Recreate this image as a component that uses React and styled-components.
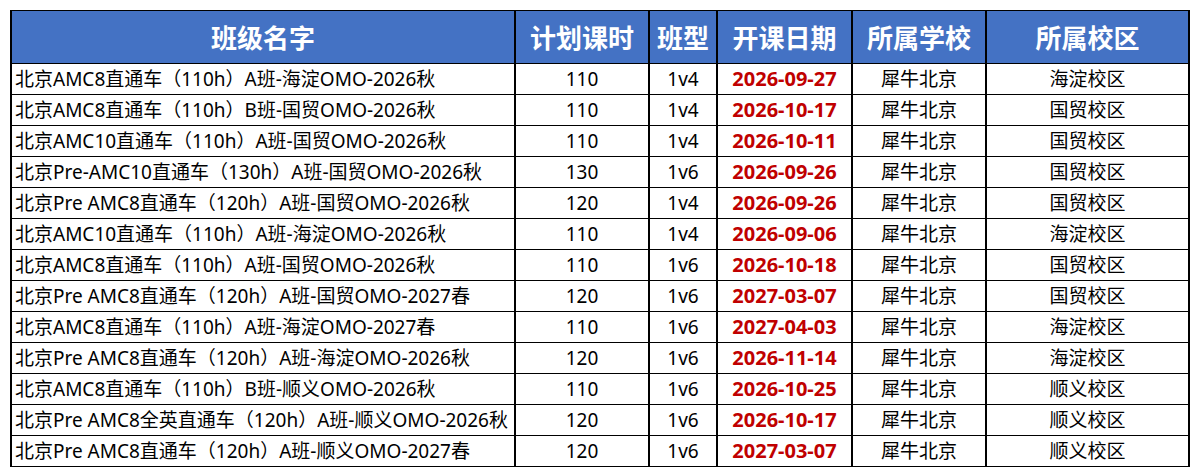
import React from "react";
import styled, { createGlobalStyle } from "styled-components";

const GlobalStyle = createGlobalStyle`
  html, body {
    margin: 0;
    padding: 0;
    background: #ffffff;
  }
  body {
    font-family: "Noto Sans", "Noto Sans CJK SC", sans-serif;
  }
`;

const Page = styled.div`
  padding: 10px 0 0 10px;
`;

const Table = styled.table`
  border-collapse: collapse;
  table-layout: fixed;
  width: 1178px;
  color: #000;
`;

const HeadCell = styled.th`
  height: 52px;
  padding: 0;
  background: #4472c4;
  color: #ffffff;
  font-size: 26px;
  font-weight: 700;
  text-align: center;
  white-space: nowrap;
  border: 1px solid #000;
  border-left-width: 2px;
  border-right-width: 2px;
`;

const Cell = styled.td`
  height: 30px;
  padding: 0 ${(p) => (p.$left ? "3px" : "0")};
  font-size: ${(p) => (p.$date ? "20px" : "19px")};
  line-height: 30px;
  white-space: nowrap;
  overflow: hidden;
  text-align: ${(p) => (p.$left ? "left" : "center")};
  font-weight: ${(p) => (p.$date ? 700 : 400)};
  color: ${(p) => (p.$date ? "#c00000" : "#000")};
  border: 1px solid #000;
  border-left-width: 2px;
  border-right-width: 2px;
`;

const columns = [
  { title: "班级名字", width: 504 },
  { title: "计划课时", width: 134 },
  { title: "班型", width: 68 },
  { title: "开课日期", width: 135 },
  { title: "所属学校", width: 134 },
  { title: "所属校区", width: 203 },
];

const rows = [
  ["北京AMC8直通车（110h）A班-海淀OMO-2026秋", "110", "1v4", "2026-09-27", "犀牛北京", "海淀校区"],
  ["北京AMC8直通车（110h）B班-国贸OMO-2026秋", "110", "1v4", "2026-10-17", "犀牛北京", "国贸校区"],
  ["北京AMC10直通车（110h）A班-国贸OMO-2026秋", "110", "1v4", "2026-10-11", "犀牛北京", "国贸校区"],
  ["北京Pre-AMC10直通车（130h）A班-国贸OMO-2026秋", "130", "1v6", "2026-09-26", "犀牛北京", "国贸校区"],
  ["北京Pre AMC8直通车（120h）A班-国贸OMO-2026秋", "120", "1v4", "2026-09-26", "犀牛北京", "国贸校区"],
  ["北京AMC10直通车（110h）A班-海淀OMO-2026秋", "110", "1v4", "2026-09-06", "犀牛北京", "海淀校区"],
  ["北京AMC8直通车（110h）A班-国贸OMO-2026秋", "110", "1v6", "2026-10-18", "犀牛北京", "国贸校区"],
  ["北京Pre AMC8直通车（120h）A班-国贸OMO-2027春", "120", "1v6", "2027-03-07", "犀牛北京", "国贸校区"],
  ["北京AMC8直通车（110h）A班-海淀OMO-2027春", "110", "1v6", "2027-04-03", "犀牛北京", "海淀校区"],
  ["北京Pre AMC8直通车（120h）A班-海淀OMO-2026秋", "120", "1v6", "2026-11-14", "犀牛北京", "海淀校区"],
  ["北京AMC8直通车（110h）B班-顺义OMO-2026秋", "110", "1v6", "2026-10-25", "犀牛北京", "顺义校区"],
  ["北京Pre AMC8全英直通车（120h）A班-顺义OMO-2026秋", "120", "1v6", "2026-10-17", "犀牛北京", "顺义校区"],
  ["北京Pre AMC8直通车（120h）A班-顺义OMO-2027春", "120", "1v6", "2027-03-07", "犀牛北京", "顺义校区"],
];

export default function App() {
  return (
    <>
      <GlobalStyle />
      <Page>
        <Table>
          <colgroup>
            {columns.map((c) => (
              <col key={c.title} style={{ width: c.width }} />
            ))}
          </colgroup>
          <thead>
            <tr>
              {columns.map((c) => (
                <HeadCell key={c.title}>{c.title}</HeadCell>
              ))}
            </tr>
          </thead>
          <tbody>
            {rows.map((r, i) => (
              <tr key={i}>
                <Cell $left>{r[0]}</Cell>
                <Cell>{r[1]}</Cell>
                <Cell>{r[2]}</Cell>
                <Cell $date>{r[3]}</Cell>
                <Cell>{r[4]}</Cell>
                <Cell>{r[5]}</Cell>
              </tr>
            ))}
          </tbody>
        </Table>
      </Page>
    </>
  );
}
